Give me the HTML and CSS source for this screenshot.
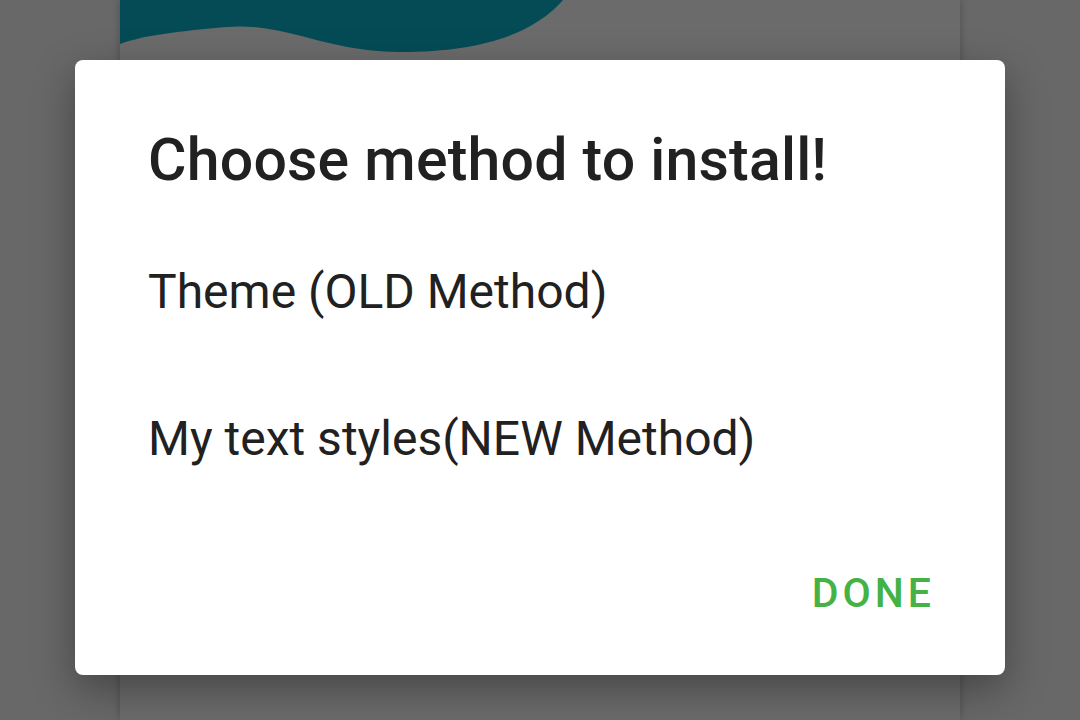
FILE: index.html
```html
<!DOCTYPE html>
<html>
<head>
<meta charset="utf-8">
<link rel="stylesheet" href="styles.css">
</head>
<body>
<div class="screen">
  <div class="app">
    <svg class="wave" width="840" height="60" viewBox="0 0 840 60">
      <path d="M0 0 H443 C415 32 365 52 280 52 C205 52 165 22 107 27 C60 31 25 35 0 44 Z" fill="#054b55"/>
    </svg>
  </div>
  <div class="overlay">
    <div class="dialog">
      <h1 class="title">Choose method to install!</h1>
      <div class="option">Theme (OLD Method)</div>
      <div class="option">My text styles(NEW Method)</div>
      <div class="actions"><span class="btn">DONE</span></div>
    </div>
  </div>
</div>
</body>
</html>
```
FILE: styles.css
```css
html, body {
  margin: 0;
  padding: 0;
}
body {
  width: 1080px;
  height: 720px;
  overflow: hidden;
  background: #686868;
  font-family: Roboto, "Liberation Sans", sans-serif;
}
.screen {
  position: relative;
  width: 1080px;
  height: 720px;
  display: flex;
  justify-content: center;
}
.app {
  width: 840px;
  height: 720px;
  background: #6b6b6b;
  box-shadow: 0 0 8px rgba(0,0,0,0.25);
}
.wave {
  display: block;
}
.overlay {
  position: absolute;
  inset: 0;
  display: flex;
  justify-content: center;
  padding-top: 60px;
}
.dialog {
  width: 930px;
  height: 615px;
  box-sizing: border-box;
  background: #fff;
  border-radius: 8px;
  box-shadow: 0 14px 40px rgba(0,0,0,0.35);
  padding: 64px 70px 0 73px;
  display: flex;
  flex-direction: column;
  color: #212121;
}
.title {
  margin: 0;
  font-size: 59px;
  font-weight: 500;
  line-height: 72px;
  letter-spacing: 0.2px;
}
.option {
  font-size: 48px;
  line-height: 60px;
  margin-top: 66px;
}
.option + .option {
  margin-top: 87px;
}
.actions {
  display: flex;
  justify-content: flex-end;
  margin-top: 98px;
}
.btn {
  font-size: 41px;
  font-weight: 500;
  line-height: 52px;
  color: #44b245;
  letter-spacing: 4px;
}
```
